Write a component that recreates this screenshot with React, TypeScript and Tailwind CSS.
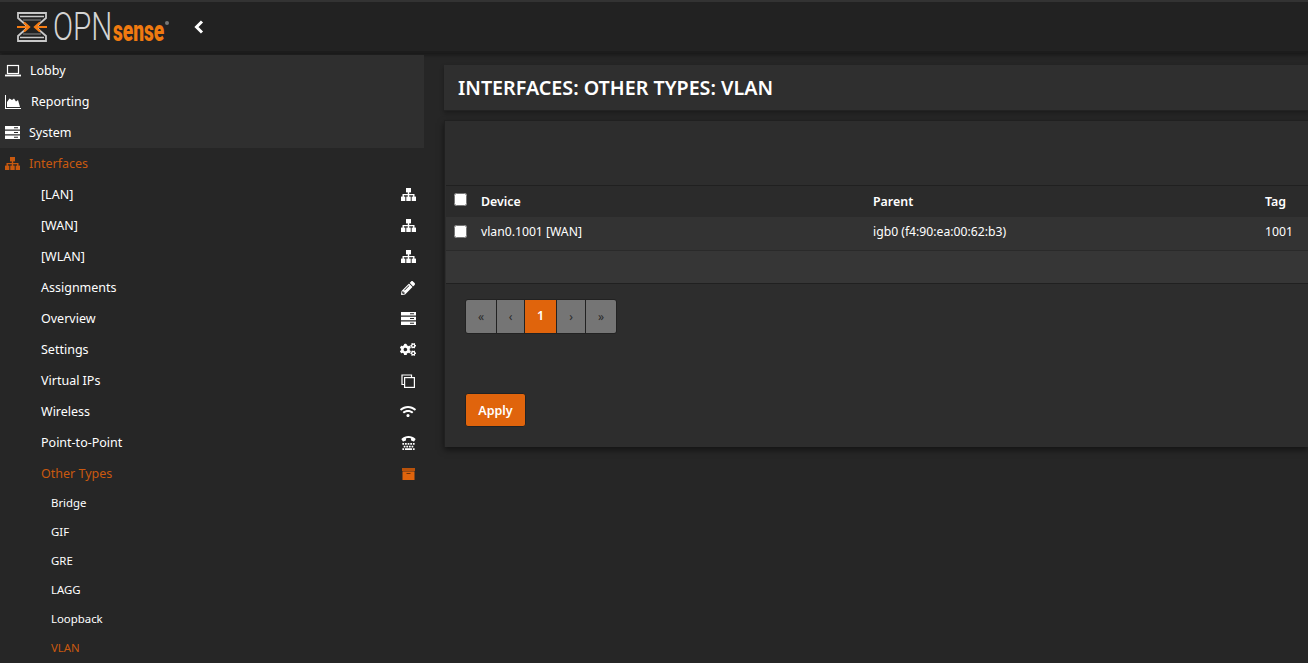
import { FaCogs, FaWifi, FaTty, FaPencilAlt } from 'react-icons/fa';
import type { ReactNode } from 'react';

function SitemapIcon() {
  return (
    <svg width="15" height="13" viewBox="0 0 15 13" fill="currentColor">
      <rect x="5" y="0" width="5" height="4.4" />
      <path d="M6.8 4h1.4v1.9h5.3V9h-1.4V7.2H8.2V9H6.8V7.2H2.9V9H1.5V5.9h5.3z" />
      <rect x="0" y="8.6" width="4.3" height="4.4" />
      <rect x="5.3" y="8.6" width="4.4" height="4.4" />
      <rect x="10.7" y="8.6" width="4.3" height="4.4" />
    </svg>
  );
}

function ServerIcon() {
  return (
    <svg width="15" height="13" viewBox="0 0 15 13" fill="currentColor">
      <path d="M0 0h15v3.4H0zM0 4.8h15v3.4H0zM0 9.6h15V13H0z" />
      <path d="M9 1.3h4v1H9zM9 6h4v1H9zM9 10.8h4v1H9z" fill="#2a2a2a" />
    </svg>
  );
}

function LaptopIcon() {
  return (
    <svg width="16" height="13" viewBox="0 0 16 13" fill="none" stroke="currentColor">
      <rect x="2.5" y="1.5" width="11" height="8" strokeWidth="1.2" />
      <path d="M0 11.5h16" strokeWidth="1.8" />
    </svg>
  );
}

function AreaChartIcon() {
  return (
    <svg width="16" height="14" viewBox="0 0 16 14" fill="currentColor">
      <path d="M0 0h1v13h15v1H0z" />
      <path d="M2 12V7l2.5-3.5L7 5l2-1.5L11 6.5 13 5l2 7z" />
    </svg>
  );
}

function CloneIcon() {
  return (
    <svg width="14" height="14" viewBox="0 0 14 14" fill="none" stroke="currentColor" strokeWidth="1.2">
      <path d="M3.5 10.5H1V1h9.5v2.5" />
      <rect x="3.6" y="3.6" width="9.8" height="9.8" />
    </svg>
  );
}

function ArchiveIcon() {
  return (
    <svg width="13" height="12" viewBox="0 0 13 12" fill="currentColor">
      <rect x="0" y="0" width="13" height="3" fill="#b9520b" />
      <rect x="0.5" y="3.4" width="12" height="8.6" />
      <rect x="4.5" y="5" width="4" height="1" fill="#6e3208" />
    </svg>
  );
}

const TOP_ITEMS = [
  { label: 'Lobby', icon: <LaptopIcon />, textClass: 'ml-[9px] pt-[2px]' },
  { label: 'Reporting', icon: <AreaChartIcon />, textClass: 'ml-[10px] pt-[2px]' },
  { label: 'System', icon: <ServerIcon />, textClass: 'ml-[9px] pt-[2px]' },
];

const SUB_ITEMS: { label: string; icon: ReactNode; active?: boolean }[] = [
  { label: '[LAN]', icon: <SitemapIcon /> },
  { label: '[WAN]', icon: <SitemapIcon /> },
  { label: '[WLAN]', icon: <SitemapIcon /> },
  { label: 'Assignments', icon: <FaPencilAlt className="h-[14px] w-[14px]" /> },
  { label: 'Overview', icon: <ServerIcon /> },
  { label: 'Settings', icon: <FaCogs className="h-[15px] w-[18px]" /> },
  { label: 'Virtual IPs', icon: <CloneIcon /> },
  { label: 'Wireless', icon: <FaWifi className="h-[13px] w-[16px]" /> },
  { label: 'Point-to-Point', icon: <FaTty className="h-[14px] w-[15px]" /> },
  { label: 'Other Types', icon: <ArchiveIcon />, active: true },
];

const LEAF_ITEMS = ['Bridge', 'GIF', 'GRE', 'LAGG', 'Loopback', 'VLAN'];

const PAGES = [
  { label: '«', w: 'w-[30px]' },
  { label: '‹', w: 'w-[28px]' },
  { label: '1', w: 'w-[32px]', active: true },
  { label: '›', w: 'w-[29px]' },
  { label: '»', w: 'w-[31px]' },
];

function Logo() {
  return (
    <div className="flex h-[30px] shrink-0 items-center">
      <svg width="30" height="30" viewBox="0 0 30 30">
        <path d="M1 1h28v5l-8 7v4l8 7v5H1v-5l8-7v-4L1 6z" fill="none" stroke="#c8c8c8" strokeWidth="1.8" />
        <path d="M3 4.5h24M3 25.5h24" stroke="#c8c8c8" strokeWidth="1.4" />
        <path d="M6 8h18M6 22h18" stroke="#8a8a8a" strokeWidth="1" />
        <path d="M0 15h11M30 15H19" stroke="#f57c14" strokeWidth="2.2" />
        <path d="M7 10.5l5 4.5-5 4.5M23 10.5L18 15l5 4.5" fill="none" stroke="#f57c14" strokeWidth="2.2" />
      </svg>
      <div className="ml-[6px] h-[30px] w-[60px] font-['Roboto',sans-serif] text-[38px] leading-[31px] font-light text-[#d4d4d4]">
        <span className="inline-block origin-left scale-x-[0.78]">OPN</span>
      </div>
      <div className="h-[30px] w-[52px] font-['Roboto',sans-serif] text-[29px] leading-[38px] font-black text-[#f07a10]">
        <span className="inline-block origin-left scale-x-[0.66]">sense</span>
      </div>
      <div className="mb-[8px] h-[4px] w-[4px] rounded-full bg-[#777777]" />
    </div>
  );
}

export default function App() {
  return (
    <div className="flex h-[663px] w-[1308px] flex-col overflow-hidden bg-[#262626] font-['Noto_Sans','Open_Sans',sans-serif] text-[12.5px] text-white">
      {/* Top bar */}
      <header className="flex h-[53px] shrink-0 items-center border-t-2 border-b-2 border-t-[#333333] border-b-[#1c1c1c] bg-[#222222] pl-[17px] shadow-[0_2px_4px_rgba(0,0,0,0.4)]">
        <Logo />
        <svg width="10" height="14" viewBox="0 0 10 14" className="ml-[25px] text-white">
          <path d="M8 1.5L2.5 7 8 12.5" fill="none" stroke="currentColor" strokeWidth="3" />
        </svg>
      </header>

      <div className="flex min-h-0 flex-1 pt-[2px]">
        {/* Sidebar */}
        <nav className="w-[424px] shrink-0">
          <div className="bg-[#2f2f2f]">
            {TOP_ITEMS.map((item) => (
              <div key={item.label} className="flex h-[31px] items-center pl-[5px]">
                {item.icon}
                <span className={item.textClass}>{item.label}</span>
              </div>
            ))}
          </div>
          <div className="flex h-[31px] items-center pl-[5px] text-[#c9590f]">
            <SitemapIcon />
            <span className="ml-[9px] pt-[2px]">Interfaces</span>
          </div>
          {SUB_ITEMS.map((item) => (
            <div key={item.label} className={`flex h-[31px] items-center justify-between pr-[8px] pl-[41px] ${item.active ? 'text-[#c9590f]' : ''}`}>
              <span className="pt-[2px]">{item.label}</span>
              <span className={`flex w-[16px] justify-center ${item.active ? 'text-[#e0640c]' : ''}`}>{item.icon}</span>
            </div>
          ))}
          {LEAF_ITEMS.map((label) => (
            <div key={label} className={`flex h-[29px] items-center pb-[2px] pl-[51px] text-[11.4px] ${label === 'VLAN' ? 'text-[#c9590f]' : ''}`}>
              {label}
            </div>
          ))}
        </nav>

        {/* Content */}
        <main className="min-w-0 flex-1 pt-[10px] pl-5">
          <div className="flex h-[46px] items-center border-b border-[#222222] bg-[#2f2f2f] pl-[14px] text-[19.7px] font-semibold shadow-[0_2px_4px_rgba(0,0,0,0.3)]">
            INTERFACES: OTHER TYPES: VLAN
          </div>
          <section className="mt-[9px] h-[327px] border-t border-l border-[#202020] bg-[#2d2d2d] pl-[1px] shadow-[0_3px_6px_rgba(0,0,0,0.5)]">
            <div className="h-[64px]" />
            <div className="flex h-[32px] items-center border-t border-[#202020] bg-[#2b2b2b] pl-2 text-[12.4px] font-semibold">
              <input type="checkbox" className="h-[13px] w-[13px] -translate-y-[2px]" />
              <span className="ml-[14px] w-[392px] pt-[2px]">Device</span>
              <span className="w-[392px] pt-[2px]">Parent</span>
              <span className="pt-[2px]">Tag</span>
            </div>
            <div className="flex h-[33px] items-center bg-[#333333] pl-2 text-[12.2px]">
              <input type="checkbox" className="h-[13px] w-[13px] -translate-y-[2px]" />
              <span className="ml-[14px] w-[392px] -translate-y-[1px]">vlan0.1001 [WAN]</span>
              <span className="w-[392px] -translate-y-[1px]">igb0 (f4:90:ea:00:62:b3)</span>
              <span className="-translate-y-[1px]">1001</span>
            </div>
            <div className="h-[34px] border-t border-b border-t-[#2a2a2a] border-b-[#202020] bg-[#363636]" />

            <div className="mt-[15px] ml-[19px] flex h-[35px] w-fit overflow-hidden rounded-[3px] border border-[#222222]">
              {PAGES.map((p, i) => (
                <div
                  key={i}
                  className={`flex items-center justify-center ${p.w} ${i > 0 ? 'border-l border-[#222222]' : ''} ${p.active ? 'bg-[#e0640c] text-[12.5px] font-semibold text-white' : 'bg-[#757575] text-[12px] text-[#2a2a2a]'}`}
                >
                  {p.label}
                </div>
              ))}
            </div>

            <button className="mt-[59px] ml-[19px] flex h-[34px] w-[61px] items-center justify-center rounded-[3px] border border-[#222222] bg-[#e0640c] pt-[3px] font-semibold text-white">
              Apply
            </button>
          </section>
        </main>
      </div>
    </div>
  );
}
